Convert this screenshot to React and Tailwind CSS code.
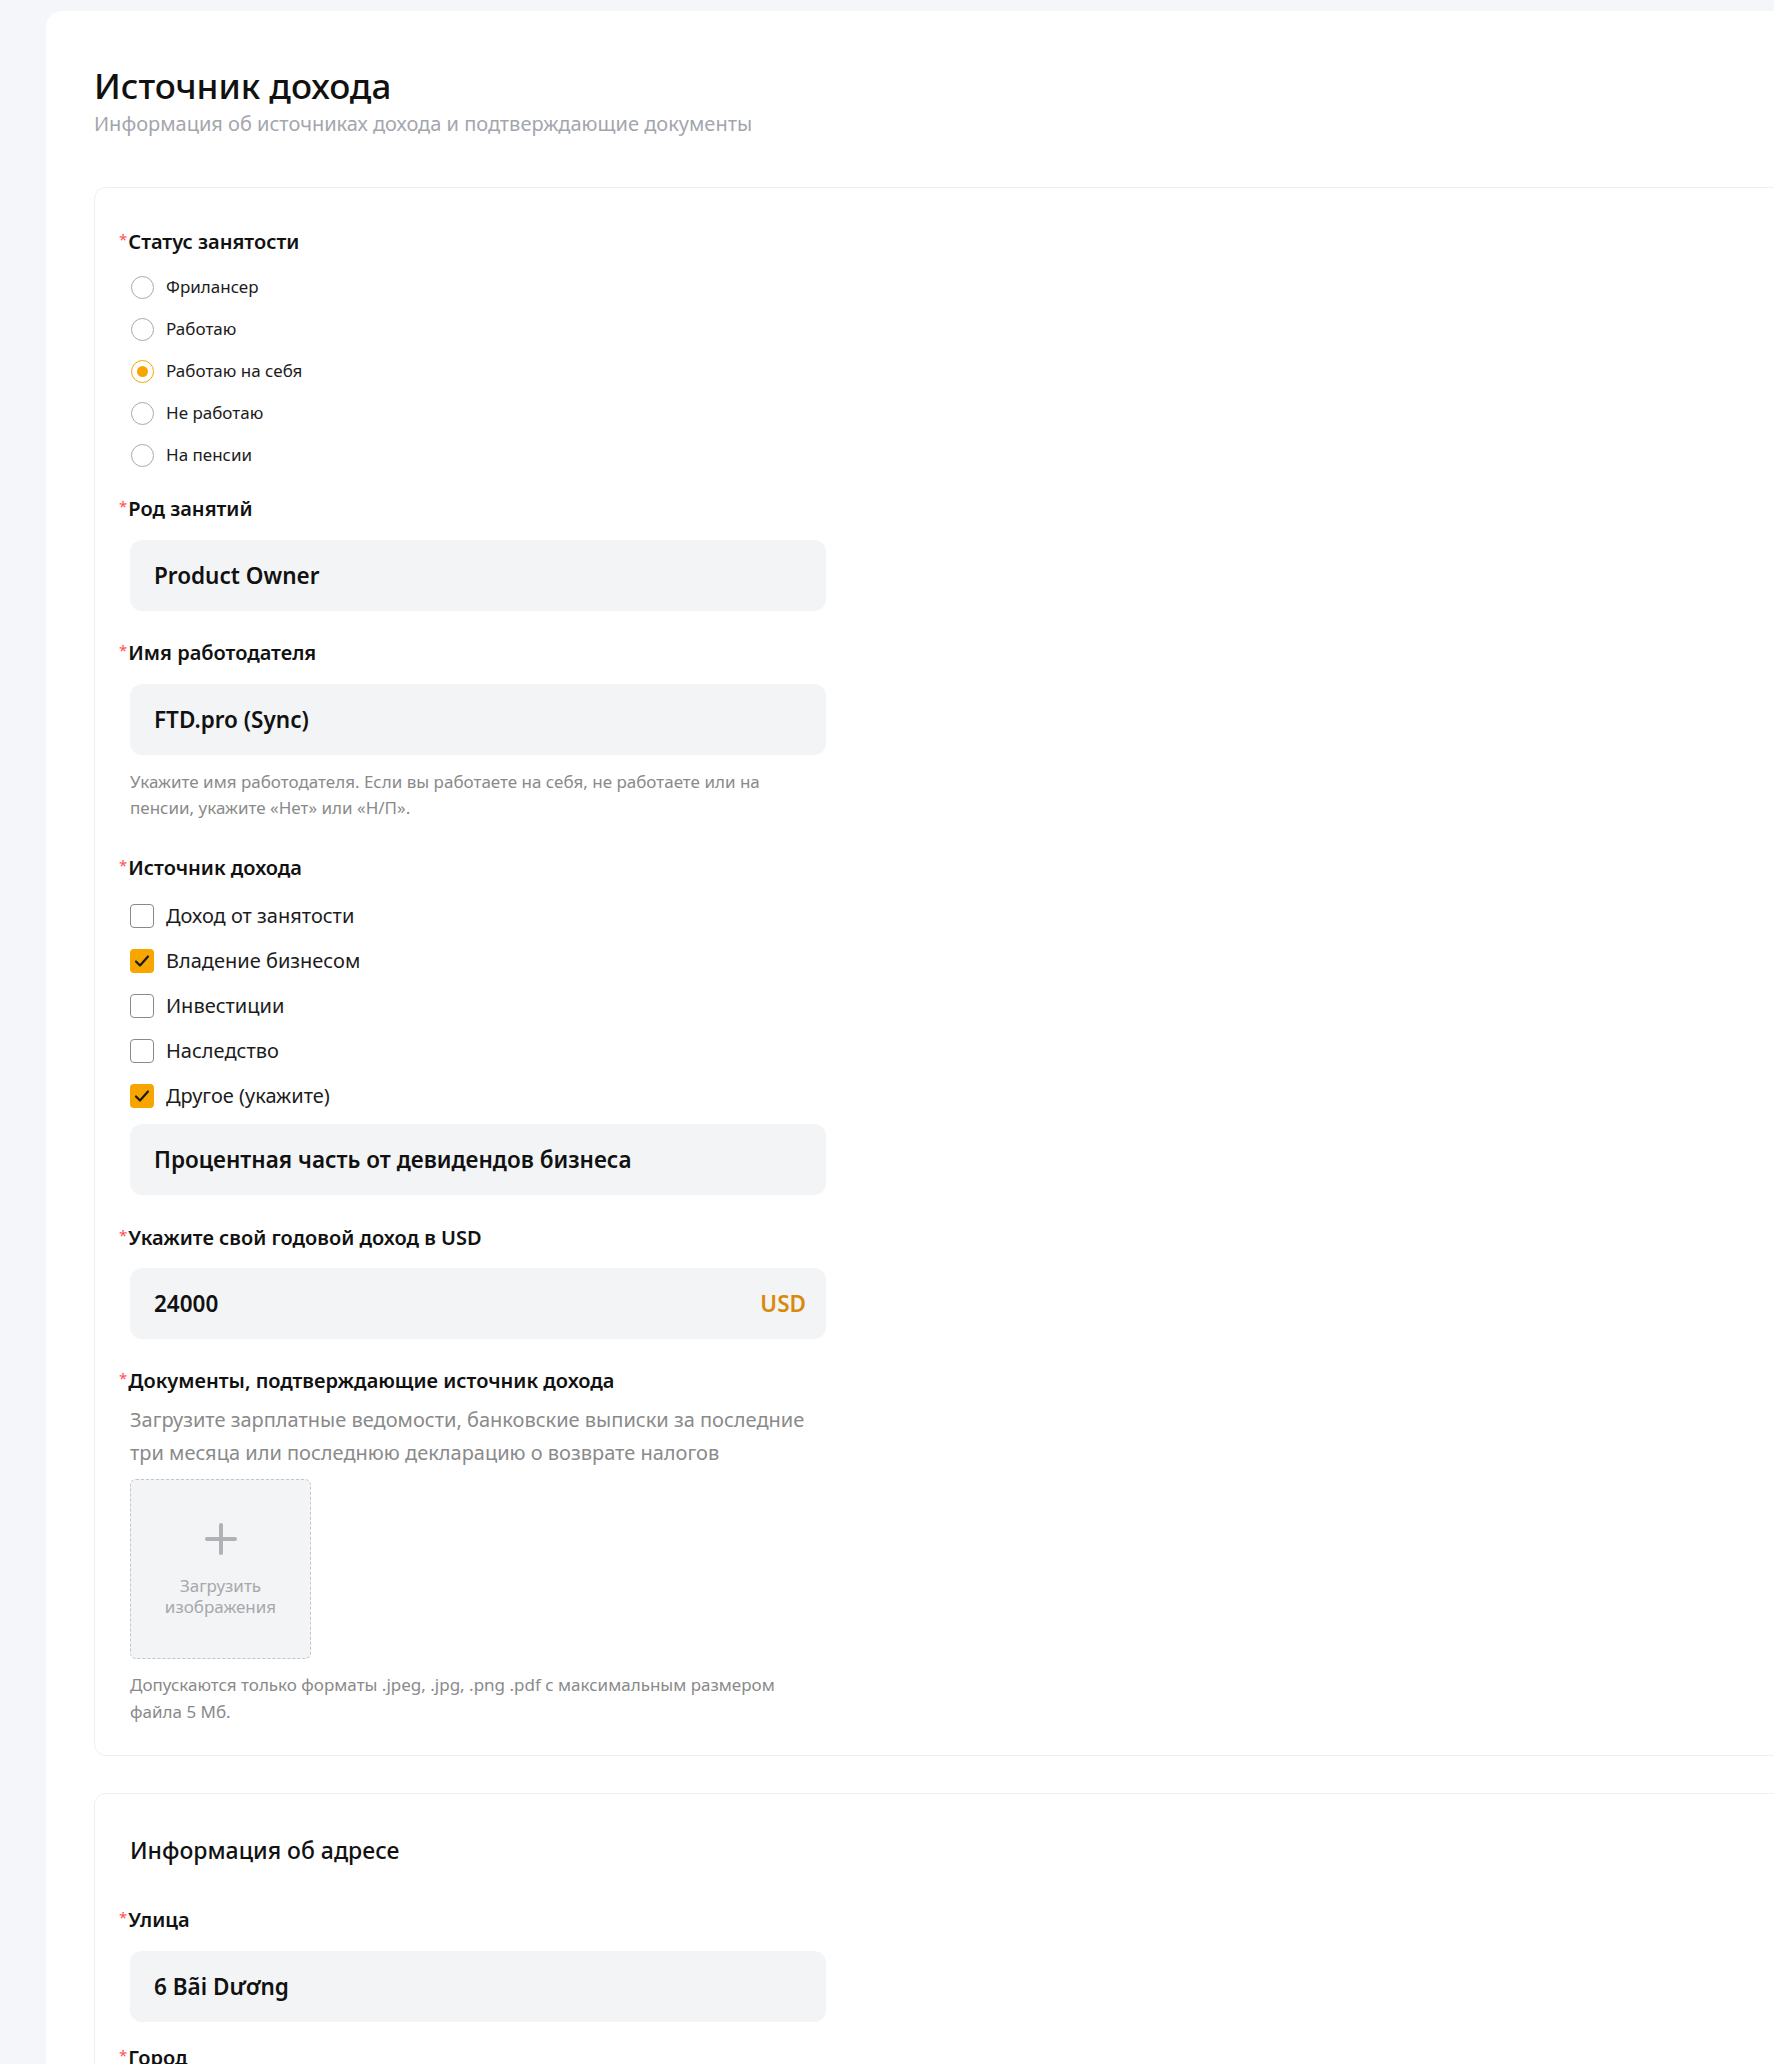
import React from "react";

const employment = ["Фрилансер", "Работаю", "Работаю на себя", "Не работаю", "На пенсии"];
const sources = [
    { label: "Доход от занятости", checked: false },
    { label: "Владение бизнесом", checked: true },
    { label: "Инвестиции", checked: false },
    { label: "Наследство", checked: false },
    { label: "Другое (укажите)", checked: true },
];

function Label({ children }) {
    return (
        <div className="flex items-start text-[20px] leading-[28px] font-semibold text-[#111]">
            <span className="mr-[1px] text-[15px] leading-[22px] font-normal text-[#ff4d4f]">*</span>
            {children}
        </div>
    );
}

function Field({ children, suffix }) {
    return (
        <div className="ml-[11px] flex h-[71px] w-[696px] items-center justify-between rounded-[12px] bg-[#f3f4f6] pl-[24px] pr-[20px]">
            <span className="text-[22.5px] font-semibold text-[#111]">{children}</span>
            {suffix ? (
                <span className="text-[22.5px] font-semibold text-[#d98a0b]">{suffix}</span>
            ) : null}
        </div>
    );
}

function Radio({ label, checked }) {
    return (
        <div className="flex h-[42px] items-center gap-[12px] pl-[12px]">
            <span
                className={
                    checked
                        ? "flex h-[23px] w-[23px] items-center justify-center rounded-full border-[1.5px] border-[#f7a600] bg-white"
                        : "flex h-[23px] w-[23px] items-center justify-center rounded-full border-[1.5px] border-[#a9a9a9] bg-white"
                }
            >
                {checked ? <span className="h-[11px] w-[11px] rounded-full bg-[#f7a600]" /> : null}
            </span>
            <span className="text-[17px] text-[#1c1c1c]">{label}</span>
        </div>
    );
}

function Checkbox({ label, checked }) {
    return (
        <div className="flex h-[45px] items-center gap-[12px] pl-[11px]">
            {checked ? (
                <span className="flex h-[24px] w-[24px] items-center justify-center rounded-[4px] bg-[#f7a600]">
                    <svg width="18" height="18" viewBox="0 0 18 18" fill="none">
                        <path d="M3 9.5l4 4L15 4.5" stroke="#1a1a1a" strokeWidth="2.2" strokeLinecap="round" strokeLinejoin="round" />
                    </svg>
                </span>
            ) : (
                <span className="h-[24px] w-[24px] rounded-[4px] border-[1.5px] border-[#8a8a8a] bg-white" />
            )}
            <span className="text-[20px] text-[#1c1c1c]">{label}</span>
        </div>
    );
}

export default function App() {
    return (
        <div
            className="min-h-[2064px] w-full overflow-hidden bg-[#f5f6fa] pl-[46px] pt-[11px]"
            style={{ fontFamily: '"Noto Sans", "Open Sans", sans-serif' }}
        >
            <div className="min-h-[2060px] w-[1900px] rounded-tl-[16px] bg-white pl-[48px] pt-[52px]">
                <h1 className="text-[35px] leading-[46px] font-medium text-[#111]">Источник дохода</h1>
                <p className="mt-[1px] text-[20px] leading-[28px] text-[#a3a6ad]">
                    Информация об источниках дохода и подтверждающие документы
                </p>

                <div className="mt-[49px] w-[1800px] rounded-[12px] border border-[#eeeff1] pb-[30px] pl-[24px] pt-[40px]">
                    <Label>Статус занятости</Label>
                    <div className="mt-[10px] flex flex-col">
                        {employment.map((item) => (
                            <Radio key={item} label={item} checked={item === "Работаю на себя"} />
                        ))}
                    </div>

                    <div className="mt-[19px]">
                        <Label>Род занятий</Label>
                    </div>
                    <div className="mt-[17px]">
                        <Field>Product Owner</Field>
                    </div>

                    <div className="mt-[28px]">
                        <Label>Имя работодателя</Label>
                    </div>
                    <div className="mt-[17px]">
                        <Field>FTD.pro (Sync)</Field>
                    </div>
                    <p className="ml-[11px] mt-[14px] w-[660px] text-[17px] leading-[26px] text-[#8a8a8a]">
                        Укажите имя работодателя. Если вы работаете на себя, не работаете или на пенсии, укажите «Нет» или «Н/П».
                    </p>

                    <div className="mt-[33px]">
                        <Label>Источник дохода</Label>
                    </div>
                    <div className="mt-[11px] flex flex-col">
                        {sources.map((s) => (
                            <Checkbox key={s.label} label={s.label} checked={s.checked} />
                        ))}
                    </div>
                    <div className="mt-[6px]">
                        <Field>Процентная часть от девидендов бизнеса</Field>
                    </div>

                    <div className="mt-[29px]">
                        <Label>Укажите свой годовой доход в USD</Label>
                    </div>
                    <div className="mt-[16px]">
                        <Field suffix="USD">24000</Field>
                    </div>

                    <div className="mt-[28px]">
                        <Label>Документы, подтверждающие источник дохода</Label>
                    </div>
                    <p className="ml-[11px] mt-[8px] w-[690px] text-[20px] leading-[33px] text-[#8a8a8a]">
                        Загрузите зарплатные ведомости, банковские выписки за последние три месяца или последнюю декларацию о возврате налогов
                    </p>
                    <div className="ml-[11px] mt-[10px] flex h-[180px] w-[181px] flex-col items-center rounded-[6px] border border-dashed border-[#c4c6ca] bg-[#f3f4f6] pt-[42px]">
                        <svg width="34" height="34" viewBox="0 0 34 34" fill="none">
                            <path d="M17 3v28M3 17h28" stroke="#aeb1b6" strokeWidth="4" strokeLinecap="round" />
                        </svg>
                        <span className="mt-[19px] text-center text-[17px] leading-[21px] text-[#a6a8ac]">
                            Загрузить
                            <br />
                            изображения
                        </span>
                    </div>
                    <p className="ml-[11px] mt-[12px] w-[660px] text-[17px] leading-[27px] text-[#8a8a8a]">
                        Допускаются только форматы .jpeg, .jpg, .png .pdf с максимальным размером файла 5 Мб.
                    </p>
                </div>

                <div className="mt-[37px] w-[1800px] rounded-[12px] border border-[#eeeff1] pb-[40px] pl-[24px] pt-[40px]">
                    <h2 className="ml-[11px] text-[23px] leading-[32px] font-medium text-[#111]">Информация об адресе</h2>
                    <div className="mt-[40px]">
                        <Label>Улица</Label>
                    </div>
                    <div className="mt-[17px]">
                        <Field>6 Bãi Dương</Field>
                    </div>
                    <div className="mt-[22px]">
                        <Label>Город</Label>
                    </div>
                </div>
            </div>
        </div>
    );
}
